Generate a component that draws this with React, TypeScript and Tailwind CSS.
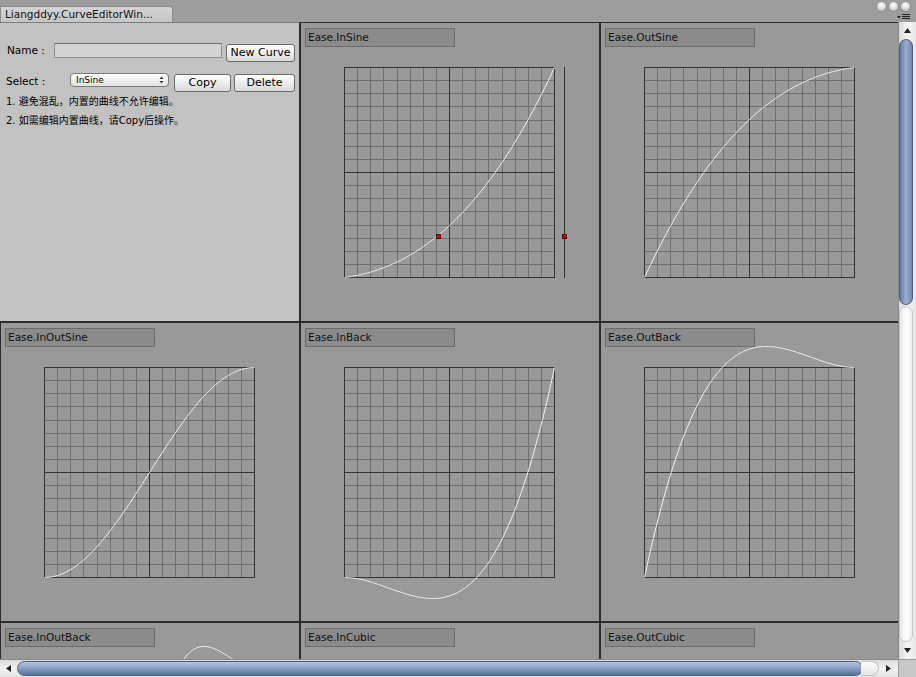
import React from 'react';

type Ease = (t: number) => number;

const c1 = 1.70158;
const c2 = c1 * 1.525;
const c3 = c1 + 1;

// Unity keyframe curve = cubic hermite between (0,0) and (1,1)
const hermite = (m0: number, m1: number): Ease => (t) =>
  (t * t * t - 2 * t * t + t) * m0 + (-2 * t * t * t + 3 * t * t) + (t * t * t - t * t) * m1;

const inSine = hermite(0.13, 2.15);
const outSine: Ease = (t) => 1 - inSine(1 - t);
const inOutSine: Ease = (t) => -(Math.cos(Math.PI * t) - 1) / 2;
const inBack: Ease = (t) => c3 * t * t * t - c1 * t * t;
const outBack: Ease = (t) => 1 + c3 * Math.pow(t - 1, 3) + c1 * Math.pow(t - 1, 2);
const inOutBack: Ease = (t) =>
  t < 0.5
    ? (Math.pow(2 * t, 2) * ((c2 + 1) * 2 * t - c2)) / 2
    : (Math.pow(2 * t - 2, 2) * ((c2 + 1) * (t * 2 - 2) + c2) + 2) / 2;
const inCubic: Ease = (t) => t * t * t;
const outCubic: Ease = (t) => 1 - Math.pow(1 - t, 3);

const GX = 43;
const GY = 44;
const GS = 210;

const curvePath = (fn: Ease) => {
  const pts: string[] = [];
  for (let i = 0; i <= 240; i++) {
    const t = i / 240;
    const x = GX + 0.5 + t * GS;
    const y = GY + 0.5 + (1 - fn(t)) * GS;
    pts.push(`${i === 0 ? 'M' : 'L'}${x.toFixed(2)} ${y.toFixed(2)}`);
  }
  return pts.join(' ');
};

const Grid = () => {
  const lines = [];
  for (let i = 0; i <= 16; i++) {
    const off = Math.round((i * GS) / 16) + 0.5;
    const major = i === 0 || i === 8 || i === 16;
    const stroke = major ? '#333333' : '#6f6f6f';
    lines.push(<line key={'v' + i} x1={GX + off} y1={GY} x2={GX + off} y2={GY + GS + 1} stroke={stroke} strokeWidth={1} />);
    lines.push(<line key={'h' + i} x1={GX} y1={GY + off} x2={GX + GS + 1} y2={GY + off} stroke={stroke} strokeWidth={1} />);
  }
  // draw majors on top
  return <g shapeRendering="crispEdges">{lines.sort((a, b) => (a.props.stroke === '#333333' ? 1 : 0) - (b.props.stroke === '#333333' ? 1 : 0))}</g>;
};

interface CellProps {
  name: string;
  fn: Ease;
  selected?: boolean;
}

const CurveCell: React.FC<CellProps> = ({ name, fn, selected }) => (
  <div className="relative w-[300px] h-[300px] border border-[#2b2b2b] bg-[#999999] overflow-hidden">
    <svg className="absolute inset-0" width={298} height={298}>
      <Grid />
      <path d={curvePath(fn)} fill="none" stroke="#f4f4f4" strokeWidth={1} />
      {selected && (
        <g>
          <line x1={263.5} y1={GY} x2={263.5} y2={GY + GS + 1} stroke="#333333" strokeWidth={1} shapeRendering="crispEdges" />
          <rect x={135.5} y={211.5} width={4} height={4} fill="#e00000" stroke="#5a0000" strokeWidth={1} shapeRendering="crispEdges" />
          <rect x={261.5} y={211.5} width={4} height={4} fill="#e00000" stroke="#5a0000" strokeWidth={1} shapeRendering="crispEdges" />
        </g>
      )}
    </svg>
    <div className="relative ml-[4px] mt-[5px] w-[150px] h-[19px] bg-[#8b8b8b] border border-[#6c6c6c] pl-[2px] text-[10.5px] leading-[17px] text-[#111]">
      {name}
    </div>
  </div>
);

const Btn: React.FC<{ className: string; children: React.ReactNode }> = ({ className, children }) => (
  <button
    className={`h-[18px] rounded-[3px] border border-[#6a6a6a] bg-gradient-to-b from-[#ffffff] to-[#dadada] text-[11px] leading-[16px] text-black ${className}`}
  >
    {children}
  </button>
);

const LeftPanel = () => (
  <div className="w-[300px] h-[300px] bg-[#c2c2c2] border-t border-t-[#7e7e7e] border-r border-b border-r-[#2b2b2b] border-b-[#2b2b2b] text-black">
    <div className="flex items-start mt-[20px]">
      <span className="w-[54px] pl-[7px] text-[10.5px] leading-[15px]">Name :</span>
      <div className="w-[168px] h-[15px] bg-[#d3d3d3] border border-[#8e8e8e] border-t-[#707070]" />
      <Btn className="ml-[4px] mt-[1px] w-[69px]">New Curve</Btn>
    </div>
    <div className="flex items-start mt-[11px]">
      <span className="w-[70px] pl-[6px] mt-[1px] text-[10.5px] leading-[14px]">Select :</span>
      <div className="w-[99px] h-[14px] flex items-center justify-between pl-[5px] pr-[4px] rounded-[4px] border border-[#7c7c7c] bg-gradient-to-b from-[#ffffff] to-[#e2e2e2] text-[9px] leading-none">
        <span>InSine</span>
        <svg width="5" height="8" viewBox="0 0 5 8">
          <path d="M0.5 3 L2.5 0.5 L4.5 3 Z M0.5 5 L2.5 7.5 L4.5 5 Z" fill="#333" />
        </svg>
      </div>
      <Btn className="ml-[5px] mt-[1px] w-[57px]">Copy</Btn>
      <Btn className="ml-[3px] mt-[1px] w-[61px]">Delete</Btn>
    </div>
    <div className="pl-[6px] text-[10px] leading-[19px]">
      <div>1. 避免混乱，内置的曲线不允许编辑。</div>
      <div>2. 如需编辑内置曲线，请Copy后操作。</div>
    </div>
  </div>
);

const cells: CellProps[] = [
  { name: 'Ease.InSine', fn: inSine, selected: true },
  { name: 'Ease.OutSine', fn: outSine },
  { name: 'Ease.InOutSine', fn: inOutSine },
  { name: 'Ease.InBack', fn: inBack },
  { name: 'Ease.OutBack', fn: outBack },
  { name: 'Ease.InOutBack', fn: inOutBack },
  { name: 'Ease.InCubic', fn: inCubic },
  { name: 'Ease.OutCubic', fn: outCubic },
];

const Bubble = () => (
  <div className="w-[11px] h-[11px] rounded-full border border-[#8d8d8d] bg-[radial-gradient(circle_at_50%_35%,#ffffff_0%,#e4e4e4_40%,#a9a9a9_100%)]" />
);

export default function App() {
  return (
    <div className="w-[916px] h-[677px] bg-[#9b9b9b] overflow-hidden font-['DejaVu_Sans','Noto_Sans_CJK_SC',sans-serif]">
      {/* title / tab strip */}
      <div className="h-[22px] flex bg-[#9d9d9d]">
        <div className="mt-[6px] h-[16px] w-[173px] rounded-tr-[3px] border-t border-r border-l border-[#8a8a8a] bg-gradient-to-b from-[#d4d4d4] to-[#c6c6c6] pl-[4px] text-[10.5px] leading-[15px] text-[#111]">
          Liangddyy.CurveEditorWin...
        </div>
        <div className="ml-auto mr-[5px] flex flex-col items-end">
          <div className="flex gap-[1px] mt-[1px]">
            <Bubble />
            <Bubble />
            <Bubble />
          </div>
          <svg className="mt-[1px] mr-[1px]" width="13" height="7" viewBox="0 0 13 7">
            <path d="M0 3 L4 3 L2 5.5 Z" fill="#222" />
            <rect x="5" y="1" width="8" height="1" fill="#222" />
            <rect x="5" y="3" width="8" height="1" fill="#222" />
            <rect x="5" y="5" width="8" height="1" fill="#222" />
          </svg>
        </div>
      </div>

      <div className="flex">
        {/* viewport */}
        <div className="w-[898px] h-[637px] overflow-hidden">
          <div className="w-[900px] grid grid-cols-[300px_300px_300px]">
            <LeftPanel />
            {cells.map((c) => (
              <CurveCell key={c.name} {...c} />
            ))}
          </div>
        </div>
        {/* vertical scrollbar */}
        <div className="w-[18px] h-[637px] flex flex-col bg-gradient-to-r from-[#d9d9d9] via-[#f6f6f6] to-[#e6e6e6] border-l border-[#8a8a8a]">
          <div className="h-[17px] flex items-center justify-center">
            <svg width="7" height="5" viewBox="0 0 7 5"><path d="M0 5 L3.5 0 L7 5 Z" fill="#222" /></svg>
          </div>
          <div className="ml-[0px] w-[14px] h-[266px] rounded-full border border-[#4b6088] bg-gradient-to-r from-[#5f789f] via-[#9db0cf] to-[#6e87af]" />
          <div className="flex-1 mx-[0px] mt-[1px] w-[14px] rounded-full bg-gradient-to-r from-[#e6e6e6] via-[#ffffff] to-[#eeeeee] border border-[#c4c4c4]" />
          <div className="h-[17px] flex items-center justify-center">
            <svg width="7" height="5" viewBox="0 0 7 5"><path d="M0 0 L3.5 5 L7 0 Z" fill="#222" /></svg>
          </div>
        </div>
      </div>

      {/* horizontal scrollbar */}
      <div className="flex h-[18px]">
        <div className="w-[898px] h-[18px] flex items-center border-t border-[#8a8a8a] bg-gradient-to-b from-[#dadada] via-[#f3f3f3] to-[#e4e4e4]">
          <div className="w-[17px] flex items-center justify-center">
            <svg width="5" height="7" viewBox="0 0 5 7"><path d="M5 0 L0 3.5 L5 7 Z" fill="#222" /></svg>
          </div>
          <div className="w-[846px] h-[15px] rounded-full border border-[#4b6088] bg-gradient-to-b from-[#b7c6dd] via-[#869dc2] to-[#5a739c]" />
          <div className="w-[18px] h-[15px] -ml-[2px] rounded-r-full bg-gradient-to-b from-[#ffffff] to-[#e4e4e4] border border-l-0 border-[#c4c4c4]" />
          <div className="flex-1 flex items-center justify-center">
            <svg width="5" height="7" viewBox="0 0 5 7"><path d="M0 0 L5 3.5 L0 7 Z" fill="#222" /></svg>
          </div>
        </div>
        <div className="w-[18px] h-[18px] bg-[#c8c8c8] border-t border-l border-[#9a9a9a]" />
      </div>
    </div>
  );
}
